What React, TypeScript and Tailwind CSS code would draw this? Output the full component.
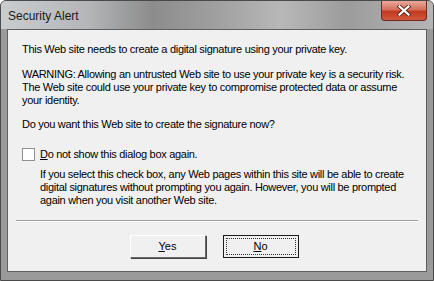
export default function App() {
  return (
    <div
      className="w-[434px] h-[281px] flex flex-col bg-[#9a9a9a] border border-[#4a4a4a] rounded-t-[6px] overflow-hidden text-black"
      style={{ fontFamily: '"Liberation Sans", Arial, sans-serif' }}
    >
      {/* Title bar */}
      <div className="relative h-[28px] shrink-0 flex items-center px-[7px] bg-[linear-gradient(90deg,#c9cdd0_0%,#b4b6b8_20%,#8c8c8c_35%,#a0a0a0_50%,#b8b8b8_65%,#9c9c9c_80%,#b5b5b5_100%)]">
        <span className="text-[12px] leading-none text-[#1a1a1a] pt-[2px]">Security Alert</span>
        <button className="absolute right-[6px] top-0 w-[46px] h-[20px] rounded-b-[4px] border border-t-0 border-[#6b2a22] bg-[linear-gradient(180deg,#e9a99b_0%,#d5705d_45%,#c23a1f_55%,#d2573a_100%)] flex items-center justify-center">
          <svg width="14" height="11" viewBox="0 0 14 11">
            <path
              d="M2.5 1.5L11.5 9.5M11.5 1.5L2.5 9.5"
              stroke="#5a2a22"
              strokeWidth="4"
              strokeLinecap="square"
            />
            <path
              d="M2.5 1.5L11.5 9.5M11.5 1.5L2.5 9.5"
              stroke="#ffffff"
              strokeWidth="2.2"
              strokeLinecap="square"
            />
          </svg>
        </button>
      </div>

      {/* Client area */}
      <div className="flex-1 mx-[6px] mb-[8px] border border-[#5f5f5f] bg-[#f0f0f0] flex flex-col text-[11px] leading-[13px] tracking-[-0.3px]">
        <div className="pl-[14px] pr-[4px] pt-[13px] flex flex-col whitespace-nowrap">
          <p>This Web site needs to create a digital signature using your private key.</p>
          <p className="mt-[12px]">
            WARNING: Allowing an untrusted Web site to use your private key is a security risk.
            <br />
            The Web site could use your private key to compromise protected data or assume
            <br />
            your identity.
          </p>
          <p className="mt-[11px]">Do you want this Web site to create the signature now?</p>

          <label className="mt-[17px] flex items-center gap-[5px]">
            <span className="w-[13px] h-[13px] border border-[#8e8f8f] bg-white shrink-0" />
            <span>
              <u>D</u>o not show this dialog box again.
            </span>
          </label>
          <p className="mt-[7px] pl-[18px]">
            If you select this check box, any Web pages within this site will be able to create
            <br />
            digital signatures without prompting you again. However, you will be prompted
            <br />
            again when you visit another Web site.
          </p>
        </div>

        <div className="mx-[8px] mt-[13px] border-t border-b border-t-[#a0a0a0] border-b-white" />

        <div className="flex justify-center gap-[17px] mt-[13px] pr-[6px] tracking-normal">
          <button className="w-[76px] h-[23px] bg-[#f0f0f0] border border-t-white border-l-white border-r-[#6d6d6d] border-b-[#6d6d6d] shadow-[1px_1px_0_#404040] text-[11px]">
            <u>Y</u>es
          </button>
          <button className="w-[76px] h-[23px] bg-[#f0f0f0] border border-[#1a1a1a] p-[2px] text-[11px]">
            <span className="flex items-center justify-center w-full h-full border border-dotted border-[#333]">
              <u>N</u>o
            </span>
          </button>
        </div>
      </div>
    </div>
  );
}
